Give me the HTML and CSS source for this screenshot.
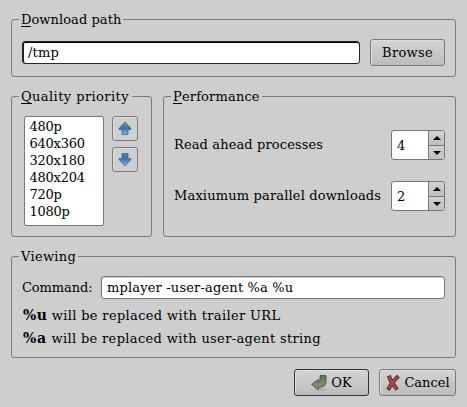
FILE: index.html
```html
<!DOCTYPE html>
<html lang="en">
<head>
<meta charset="utf-8">
<title>Preferences</title>
<link rel="stylesheet" href="styles.css">
</head>
<body>
<main class="dialog">
  <section class="group path">
    <h2 class="legend"><u>D</u>ownload path</h2>
    <div class="path-row">
      <div class="entry focused">/tmp</div>
      <div class="button browse">Browse</div>
    </div>
  </section>
  <div class="middle">
    <section class="group quality">
      <h2 class="legend"><u>Q</u>uality priority</h2>
      <div class="quality-row">
        <ul class="list">
          <li>480p</li><li>640x360</li><li>320x180</li><li>480x204</li><li>720p</li><li>1080p</li>
        </ul>
        <div class="arrows">
          <div class="button square">
            <svg width="16" height="16" viewBox="0 0 16 16"><defs><linearGradient id="up" x1="0" y1="0" x2="0" y2="1"><stop offset="0" stop-color="#7697bd"/><stop offset=".5" stop-color="#416fa6"/><stop offset="1" stop-color="#88b5ef"/></linearGradient></defs><path d="M8 1 14 7.500V8.500H11V13.500H5V8.500H2V7.500Z" fill="url(#up)" stroke="#3c618f" stroke-width=".8"/></svg>
          </div>
          <div class="button square">
            <svg width="16" height="16" viewBox="0 0 16 16"><defs><linearGradient id="down" x1="0" y1="0" x2="0" y2="1"><stop offset="0" stop-color="#5c82b1"/><stop offset=".4" stop-color="#416fa6"/><stop offset="1" stop-color="#8bb6ed"/></linearGradient></defs><path d="M8 14 14 7.500V6.500H11V1.500H5V6.500H2V7.500Z" fill="url(#down)" stroke="#3c618f" stroke-width=".8"/></svg>
          </div>
        </div>
      </div>
    </section>
    <section class="group performance">
      <h2 class="legend"><u>P</u>erformance</h2>
      <div class="setting">
        <span>Read ahead processes</span>
        <div class="spin"><span class="value">4</span><div class="steps"><i><svg width="8" height="4"><path d="M4 0 8 4H0Z"/></svg></i><i><svg width="8" height="4"><path d="M4 4 8 0H0Z"/></svg></i></div></div>
      </div>
      <div class="setting">
        <span class="parallel">Maxiumum parallel downloads</span>
        <div class="spin"><span class="value">2</span><div class="steps"><i><svg width="8" height="4"><path d="M4 0 8 4H0Z"/></svg></i><i><svg width="8" height="4"><path d="M4 4 8 0H0Z"/></svg></i></div></div>
      </div>
    </section>
  </div>
  <section class="group viewing">
    <h2 class="legend">Viewing</h2>
    <div class="command-row"><span class="label">Command:</span><div class="entry command">mplayer -user-agent %a %u</div></div>
    <p class="hint"><b>%u</b> will be replaced with trailer URL</p>
    <p class="hint"><b class="wide">%a</b> will be replaced with user-agent string</p>
  </section>
  <footer class="actions">
    <div class="button ok">
      <svg width="16" height="16" viewBox="0 0 16 16"><defs><linearGradient id="enter" x1="0" y1="0" x2="0" y2="1"><stop offset="0" stop-color="#607554"/><stop offset="1" stop-color="#829b73"/></linearGradient></defs><ellipse cx="9" cy="14.3" rx="6" ry="1.2" fill="#999" opacity=".6"/><path d="M9 .5H15V6.500Q15 11.500 10 12H7.500V14.500L.5 9.500 7.500 4.500V6.500H8Q9 6.500 9 5Z" fill="url(#enter)" stroke="#3f4c38" stroke-width=".8"/></svg>
      <span>OK</span>
    </div>
    <div class="button cancel">
      <svg width="16" height="16" viewBox="0 0 16 16"><path d="M4.500 2.500Q6 7 11 13M12 2.500Q7 7 4 13" fill="none" stroke="#472c32" stroke-width="4" stroke-linecap="square"/><path d="M4.500 2.500Q6 7 11 13M12 2.500Q7 7 4 13" fill="none" stroke="#b9444d" stroke-width="2.300" stroke-linecap="square"/></svg>
      <span>Cancel</span>
    </div>
  </footer>
</main>
</body>
</html>
```
FILE: styles.css
```css
* { box-sizing: border-box; }
body {
  margin: 0;
  background: #cecece;
  color: #000;
  font: 13px/17px "DejaVu Serif", serif;
}
svg { display: block; flex: none; }
.dialog { width: 467px; height: 407px; padding: 19px 11px 11px; display: flex; flex-direction: column; white-space: nowrap; }
.group { border: 1px solid #7b7b7b; border-radius: 3px; }
.legend { width: max-content; margin: -9px 0 0 7px; padding: 0 2px; background: #cecece; font: inherit; height: 17px; }
.legend u { text-decoration: none; display: inline-block; height: 16px; border-bottom: 1px solid #000; }
.path { height: 58px; }
.path .legend { letter-spacing: .06px; }
.path-row { display: flex; align-items: center; gap: 10px; margin: 11px 10px 0; }
.entry { flex: 1; height: 23px; padding: 2px 5px; background: #fff; border: 1px solid #777; border-radius: 3px; box-shadow: inset 0 1px #ccc; }
.entry.focused { border: 1px solid #262626; padding: 2px 5px; letter-spacing: .2px; box-shadow: inset 0 1px #000, inset 1px 0 #222; }
.entry.command { padding-left: 5px; letter-spacing: .17px; }
.button { display: flex; align-items: center; justify-content: center; height: 27px; border: 1px solid #7b7b7b; border-radius: 3px; background: linear-gradient(#d4d4d4, #bcbcbc); box-shadow: inset 1px 1px #dedede; }
.browse { width: 75px; letter-spacing: .3px; }
.middle { display: flex; gap: 11px; margin-top: 19px; }
.quality { width: 141px; height: 141px; }
.quality .legend { letter-spacing: .42px; padding-right: 3px; }
.quality-row { display: flex; gap: 8px; margin: 11px 12px 0; }
.list { width: 80px; height: 110px; margin: 0; padding: 1px 4.5px; list-style: none; letter-spacing: -.25px; background: #fff; border: 1px solid #777; border-radius: 2px; }
.arrows { display: flex; flex-direction: column; gap: 6px; }
.square { width: 26px; height: 25px; background: #cfcfcf; }
.performance { flex: 1; height: 141px; }
.performance .legend { letter-spacing: .16px; }
.setting { display: flex; align-items: center; justify-content: space-between; height: 30px; margin: 24px 10px 0; letter-spacing: .12px; }
.setting > span { margin-top: -2px; }
.setting + .setting { margin-top: 21px; letter-spacing: .16px; }
.performance .legend + .setting { margin-top: 25px; }
.spin { width: 54px; height: 30px; display: flex; background: #fff; border: 1px solid #777; border-radius: 3px; overflow: hidden; }
.value { width: 36px; padding: 6px 0 0 5px; }
.steps { flex: 1; border-left: 1px solid #777; display: flex; flex-direction: column; }
.steps i { height: 14px; display: flex; align-items: center; justify-content: center; background: linear-gradient(#d2d2d2, #bfbfbf); }
.steps i + i { border-top: 1px solid #777; }
.viewing { height: 102px; margin-top: 19px; }
.viewing .legend { letter-spacing: .3px; }
.command-row { display: flex; align-items: center; margin: 11px 10px 0; }
.label { width: 79px; letter-spacing: -.08px; }
.hint { margin: 8px 0 0 11px; height: 17px; line-height: 17px; letter-spacing: .34px; }
.hint + .hint { margin-top: 6px; }
.hint b { font-size: 14px; letter-spacing: .4px; }
.hint b.wide { letter-spacing: .8px; }
.actions { display: flex; justify-content: flex-end; gap: 10px; margin-top: 11px; }
.ok { width: 75px; gap: 4px; border-color: #333; }
.cancel { width: 77px; gap: 3px; }
```
